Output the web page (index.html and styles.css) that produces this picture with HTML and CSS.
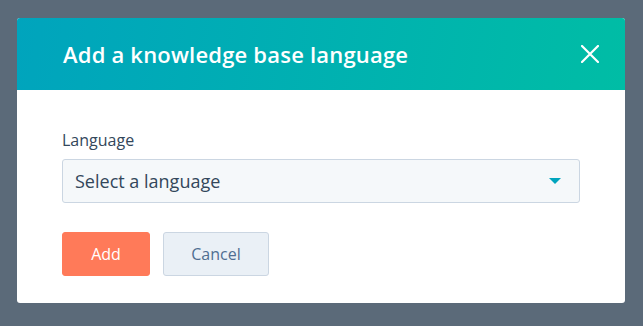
FILE: index.html
```html
<!DOCTYPE html>
<html lang="en">
<head>
    <meta charset="UTF-8">
    <title>Add a knowledge base language</title>
    <link rel="stylesheet" href="styles.css">
</head>
<body>
    <div class="modal">
        <header class="modal-header">
            <h1>Add a knowledge base language</h1>
            <button class="close" aria-label="Close">
                <svg width="18" height="18" viewBox="0 0 18 18">
                    <path d="M1 1 L17 17 M17 1 L1 17" stroke="#fff" stroke-width="2.2" stroke-linecap="round"/>
                </svg>
            </button>
        </header>
        <div class="modal-body">
            <label class="field-label">Language</label>
            <div class="select">
                <span>Select a language</span>
                <span class="caret"></span>
            </div>
            <div class="actions">
                <button class="btn btn-primary">Add</button>
                <button class="btn btn-secondary">Cancel</button>
            </div>
        </div>
    </div>
</body>
</html>
```

FILE: styles.css
```css
html, body {
    margin: 0;
    padding: 0;
}
body {
    background-color: #5b6a79;
    font-family: "Open Sans", Lato, sans-serif;
    color: #33475b;
    padding: 18px 0 0 17px;
}
.modal {
    width: 608px;
    background: #fff;
    border-radius: 3px;
    overflow: hidden;
}
.modal-header {
    height: 72px;
    background: linear-gradient(100deg, #00a4bd 0%, #00bda5 100%);
    display: flex;
    align-items: center;
    justify-content: space-between;
    padding: 0 26px 0 46px;
}
.modal-header h1 {
    margin: 0;
    color: #fff;
    font-size: 22px;
    font-weight: 600;
    letter-spacing: 0.2px;
}
.close {
    background: none;
    border: 0;
    padding: 0;
    width: 18px;
    height: 18px;
    display: flex;
    cursor: pointer;
}
.modal-body {
    padding: 39px 45px 27px 45px;
}
.field-label {
    display: block;
    font-size: 16px;
    line-height: 22px;
    color: #33475b;
}
.select {
    margin-top: 8px;
    height: 42px;
    background: #f5f8fa;
    border: 1px solid #cbd6e2;
    border-radius: 3px;
    display: flex;
    align-items: center;
    justify-content: space-between;
    padding: 0 18px 0 12px;
    font-size: 18px;
    color: #33475b;
}
.caret {
    width: 0;
    height: 0;
    border-left: 6px solid transparent;
    border-right: 6px solid transparent;
    border-top: 6px solid #00a4bd;
}
.actions {
    margin-top: 29px;
    display: flex;
    gap: 13px;
}
.btn {
    height: 44px;
    border-radius: 3px;
    font-family: inherit;
    font-size: 16px;
    cursor: pointer;
}
.btn-primary {
    width: 88px;
    background: #ff7a59;
    border: 1px solid #ff7a59;
    color: #fff;
}
.btn-secondary {
    width: 106px;
    background: #eaf0f6;
    border: 1px solid #cbd6e2;
    color: #506e91;
}
```
